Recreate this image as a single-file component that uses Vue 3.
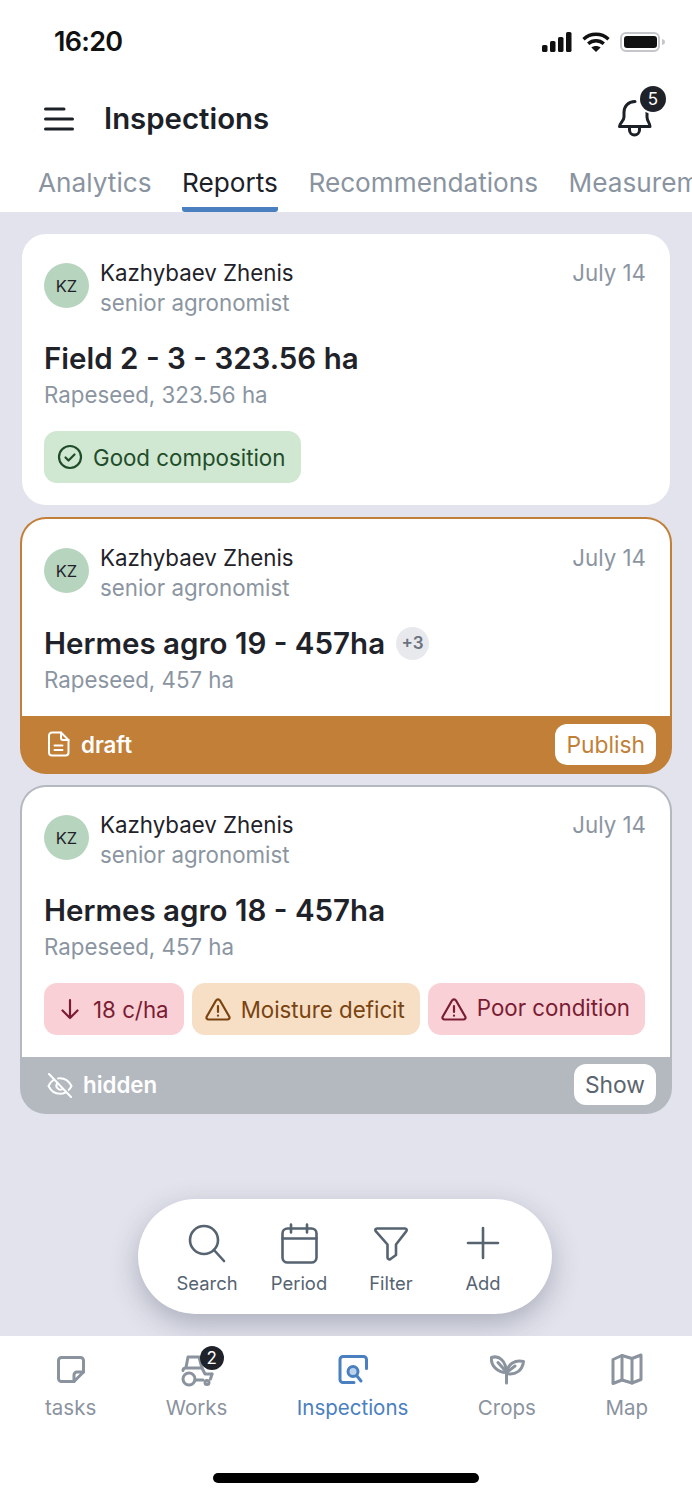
<script setup>
const tabs = [
  { label: 'Analytics' },
  { label: 'Reports', active: true },
  { label: 'Recommendations' },
  { label: 'Measurements' },
]
</script>

<template>
  <div class="screen">
    <div class="status">
      <span class="time">16:20</span>
      <div class="status-icons">
        <svg width="30" height="20" viewBox="0 0 30 20" fill="#111">
          <rect x="0" y="13" width="5.5" height="7" rx="1.6" />
          <rect x="8" y="9" width="5.5" height="11" rx="1.6" />
          <rect x="16" y="5" width="5.5" height="15" rx="1.6" />
          <rect x="24" y="0" width="5.5" height="20" rx="1.6" />
        </svg>
        <svg width="28" height="20" viewBox="0 0 28 20" fill="none" stroke="#111" stroke-width="3.4">
          <path d="M1.5 7.2C8.6 .6 19.4 .6 26.5 7.2" />
          <path d="M6.2 11.8c4.5-4 11.1-4 15.6 0" />
          <path d="M14 20l-4.6-4.6c2.6-2 6.6-2 9.2 0z" fill="#111" stroke="none" />
        </svg>
        <svg width="46" height="20" viewBox="0 0 46 20">
          <rect x="1" y="1" width="38" height="18" rx="5" fill="none" stroke="#c4c6c9" stroke-width="2" />
          <rect x="4" y="4" width="33" height="12" rx="3" fill="#111" />
          <path d="M42 7c2 .4 3 1.500 3 3s-1 2.600-3 3z" fill="#c4c6c9" />
        </svg>
      </div>
    </div>

    <header class="header">
      <svg class="menu" width="30" height="24" viewBox="0 0 30 24" fill="none" stroke="#1c2128" stroke-width="3" stroke-linecap="round">
        <path d="M1.500 2H20" />
        <path d="M1.500 12H28.500" />
        <path d="M1.500 22H28.500" />
      </svg>
      <h1 class="title">Inspections</h1>
      <div class="bell">
        <svg width="36" height="42" viewBox="0 0 36 42" fill="none" stroke="#1c2128" stroke-width="3" stroke-linecap="round" stroke-linejoin="round">
          <path d="M18 3.500C11 3.500 7 8.500 7 14.500V19C7 23 2.500 25 2.500 28.500H33C33 25 30 23 30 19V14" />
          <path d="M12.500 28.500v3.500a5 5 0 0 0 10 0v-3.500" />
        </svg>
        <span class="bell-badge">5</span>
      </div>
    </header>

    <nav class="tabs">
      <span v-for="t in tabs" :key="t.label" class="tab" :class="{ active: t.active }">{{ t.label }}</span>
    </nav>

    <main class="main">
      <article class="card plain">
        <div class="person">
          <span class="avatar">KZ</span>
          <div class="who">
            <div class="name">Kazhybaev Zhenis</div>
            <div class="role">senior agronomist</div>
          </div>
          <span class="date">July 14</span>
        </div>
        <h2 class="field">Field 2 - 3 - 323.56 ha</h2>
        <p class="crop">Rapeseed, 323.56 ha</p>
        <div class="badges">
          <span class="badge green">
            <svg width="26" height="26" viewBox="0 0 26 26" fill="none" stroke="currentColor" stroke-width="2.200" stroke-linecap="round" stroke-linejoin="round">
              <circle cx="13" cy="13" r="11" />
              <path d="M8.500 13.500l3 3 6-6" />
            </svg>
            Good composition
          </span>
        </div>
      </article>

      <article class="card framed draft">
        <div class="inner">
          <div class="person">
            <span class="avatar">KZ</span>
            <div class="who">
              <div class="name">Kazhybaev Zhenis</div>
              <div class="role">senior agronomist</div>
            </div>
            <span class="date">July 14</span>
          </div>
          <h2 class="field">Hermes agro 19 - 457ha <span class="more">+3</span></h2>
          <p class="crop">Rapeseed, 457 ha</p>
        </div>
        <div class="foot foot-draft">
          <div class="state">
            <svg width="24" height="26" viewBox="0 0 24 26" fill="none" stroke="#fff" stroke-width="2" stroke-linecap="round" stroke-linejoin="round">
              <path d="M5 1.500h9l7.500 7.500v12.500a3 3 0 0 1-3 3H5a3 3 0 0 1-3-3v-17a3 3 0 0 1 3-3z" />
              <path d="M14 1.500V7a2 2 0 0 0 2 2h5.500" />
              <path d="M7.500 14.500h8M7.500 19h8" />
            </svg>
            draft
          </div>
          <button class="action publish">Publish</button>
        </div>
      </article>

      <article class="card framed hidden">
        <div class="inner">
          <div class="person">
            <span class="avatar">KZ</span>
            <div class="who">
              <div class="name">Kazhybaev Zhenis</div>
              <div class="role">senior agronomist</div>
            </div>
            <span class="date">July 14</span>
          </div>
          <h2 class="field">Hermes agro 18 - 457ha</h2>
          <p class="crop">Rapeseed, 457 ha</p>
          <div class="badges tight">
            <span class="badge pink">
              <svg width="26" height="26" viewBox="0 0 26 26" fill="none" stroke="currentColor" stroke-width="2.200" stroke-linecap="round" stroke-linejoin="round">
                <path d="M13 4v18M5.500 14.500L13 22l7.500-7.500" />
              </svg>
              18 c/ha
            </span>
            <span class="badge orange">
              <svg width="26" height="26" viewBox="0 0 26 26" fill="none" stroke="currentColor" stroke-width="2.200" stroke-linecap="round" stroke-linejoin="round">
                <path d="M11 4.500L1.800 20.500c-.9 1.600.2 3 1.800 3h18.800c1.600 0 2.700-1.400 1.800-3L15 4.500c-.9-1.500-3.100-1.500-4 0z" />
                <path d="M13 10v6M13 19.500v.2" />
              </svg>
              Moisture deficit
            </span>
            <span class="badge pink raised">
              <svg width="26" height="26" viewBox="0 0 26 26" fill="none" stroke="currentColor" stroke-width="2.200" stroke-linecap="round" stroke-linejoin="round">
                <path d="M11 4.500L1.800 20.500c-.9 1.600.2 3 1.800 3h18.800c1.600 0 2.700-1.400 1.800-3L15 4.500c-.9-1.500-3.100-1.500-4 0z" />
                <path d="M13 10v6M13 19.500v.2" />
              </svg>
              <span class="raised-text">Poor condition</span>
            </span>
          </div>
        </div>
        <div class="foot foot-hidden">
          <div class="state">
            <svg width="26" height="26" viewBox="0 0 26 26" fill="none" stroke="#fff" stroke-width="2" stroke-linecap="round" stroke-linejoin="round">
              <path d="M2 2l22 23" />
              <path d="M7 7.500C4.500 9.200 2.700 11.500 1.500 14c2.500 5 6.800 7.800 11.500 7.800 2 0 4-.5 5.700-1.500" />
              <path d="M11 6.400c.7-.1 1.300-.2 2-.2 4.700 0 9 3 11.500 7.800-.8 1.500-1.700 2.800-2.800 3.900" />
              <path d="M10 11.500a4 4 0 0 0 5.500 5.500" />
            </svg>
            hidden
          </div>
          <button class="action show">Show</button>
        </div>
      </article>

      <div class="pill">
        <div class="pill-item">
          <svg width="44" height="44" viewBox="0 0 44 44" fill="none" stroke="#566371" stroke-width="2.600" stroke-linecap="round" stroke-linejoin="round">
            <circle cx="19" cy="18" r="14" />
            <path d="M29 28l10 11" />
          </svg>
          <span>Search</span>
        </div>
        <div class="pill-item">
          <svg width="44" height="44" viewBox="0 0 44 44" fill="none" stroke="#566371" stroke-width="2.600" stroke-linecap="round" stroke-linejoin="round">
            <rect x="5.500" y="6.500" width="34" height="34" rx="5" />
            <path d="M5.500 16.500h34M14 2.500v8M30 2.500v8" />
          </svg>
          <span>Period</span>
        </div>
        <div class="pill-item">
          <svg width="44" height="44" viewBox="0 0 44 44" fill="none" stroke="#566371" stroke-width="2.600" stroke-linecap="round" stroke-linejoin="round">
            <path d="M8 6.500h28c1.500 0 2.200 1.500 1.300 2.700L27 22.500V33l-5.500 4c-1.400.8-3 .2-3-1.500V22.500L6.700 9.200C5.800 8 6.500 6.500 8 6.500z" />
          </svg>
          <span>Filter</span>
        </div>
        <div class="pill-item">
          <svg width="44" height="44" viewBox="0 0 44 44" fill="none" stroke="#566371" stroke-width="2.600" stroke-linecap="round">
            <path d="M22 6v30M7 21h30" />
          </svg>
          <span>Add</span>
        </div>
      </div>
    </main>

    <footer class="bar">
      <div class="bar-row">
        <div class="bar-item">
          <svg width="36" height="36" viewBox="0 0 36 36" fill="none" stroke="#8a939e" stroke-width="3" stroke-linecap="round" stroke-linejoin="round">
            <path d="M8.500 5.500h19a3 3 0 0 1 3 3V20L21 29.500H8.500a3 3 0 0 1-3-3v-18a3 3 0 0 1 3-3z" />
            <path d="M30.500 20H24a3 3 0 0 0-3 3v6.500" />
          </svg>
          <span>tasks</span>
        </div>
        <div class="bar-item">
          <svg width="36" height="36" viewBox="0 0 36 36" fill="none" stroke="#8a939e" stroke-width="3" stroke-linecap="round" stroke-linejoin="round">
            <path d="M7 15.500L9 5H20L23 16" />
            <path d="M4 18.500C4 16.500 5 16 7 16H23L26 22H33" />
            <path d="M33 22L31.500 27" />
            <path d="M16 28H24" />
            <circle cx="10" cy="27" r="6" />
            <circle cx="28" cy="30.500" r="2" />
          </svg>
          <span>Works</span>
          <span class="bar-badge">2</span>
        </div>
        <div class="bar-item current">
          <svg width="36" height="36" viewBox="0 0 36 36" fill="none" stroke="#4a80bf" stroke-width="3" stroke-linecap="round" stroke-linejoin="round">
            <path d="M19 30.500H8a3 3 0 0 1-3-3v-20a3 3 0 0 1 3-3h20.500a3 3 0 0 1 3 3v9" />
            <circle cx="18" cy="19.500" r="5" fill="#bcd2ec" />
            <path d="M22 24l4 5" />
          </svg>
          <span>Inspections</span>
        </div>
        <div class="bar-item">
          <svg width="36" height="36" viewBox="0 0 36 36" fill="none" stroke="#8a939e" stroke-width="3" stroke-linecap="round" stroke-linejoin="round">
            <path d="M2.500 5.500C10 3 17.500 9 17 20.500 9 20.500 1.500 14 2.500 5.500z" />
            <path d="M34.500 9.500c-8-2-16 2-17 12 9 2 16-3 17-12z" />
            <path d="M17.500 20v11M9 10.500l8 9M26 14l-8 6" />
          </svg>
          <span>Crops</span>
        </div>
        <div class="bar-item">
          <svg width="36" height="36" viewBox="0 0 36 36" fill="none" stroke="#8a939e" stroke-width="3" stroke-linecap="round" stroke-linejoin="round">
            <path d="M4 7.500L13 3.500 23 6.500 32 3V27.500L23 31 13 28 4 31.500z" />
            <path d="M13 3.500V28M23 6.500V31" />
          </svg>
          <span>Map</span>
        </div>
      </div>
      <div class="home"></div>
    </footer>
  </div>
</template>

<style>
html, body { margin: 0; background: #fff; }
</style>

<style scoped>
.screen {
  width: 692px;
  height: 1499px;
  display: flex;
  flex-direction: column;
  overflow: hidden;
  background: #fff;
  font-family: Inter, "Liberation Sans", sans-serif;
  color: #1f2329;
}
.status {
  height: 76px;
  flex: none;
  box-sizing: border-box;
  padding: 22px 26px 0 54px;
  display: flex;
  justify-content: space-between;
  align-items: flex-start;
}
.time {
  font-size: 27px;
  font-weight: 600;
  line-height: 40px;
  color: #111;
  letter-spacing: -0.7px;
}
.status-icons {
  display: flex;
  align-items: center;
  gap: 10px;
  padding-top: 10px;
}
.header {
  height: 86px;
  flex: none;
  box-sizing: border-box;
  padding: 0 39px 0 44px;
  display: flex;
  align-items: center;
}
.menu { flex: none; }
.title {
  margin: 0 0 2px 30px;
  font-size: 29.400px;
  font-weight: 600;
  color: #1c2128;
}
.bell {
  position: relative;
  margin-left: auto;
  width: 36px;
  height: 42px;
}
.bell svg { display: block; }
.bell-badge {
  position: absolute;
  left: 23px;
  top: -12px;
  width: 26px;
  height: 26px;
  border-radius: 50%;
  background: #1f2329;
  color: #fff;
  font-size: 17px;
  line-height: 26px;
  text-align: center;
  box-shadow: 0 0 0 2px #fff;
}
.tabs {
  height: 50px;
  flex: none;
  box-sizing: border-box;
  padding-left: 38px;
  display: flex;
  gap: 30.500px;
  overflow: hidden;
  white-space: nowrap;
}
.tab {
  flex: none;
  font-size: 26.200px;
  line-height: 42px;
  height: 50px;
  box-sizing: border-box;
  color: #8a94a0;
}
.tab.active {
  color: #1c2128;
  border-bottom: 5px solid #4a80bf;
  border-radius: 0 0 3px 3px;
}
.main {
  flex: 1;
  position: relative;
  box-sizing: border-box;
  padding: 22px 20px 0;
  background: #e2e3ec;
  display: flex;
  flex-direction: column;
  gap: 11px;
}
.card {
  overflow: hidden;
}
.plain {
  margin: 0 2px 1px;
  padding: 24px 22px 22px;
  border-radius: 24px;
  background: #fff;
}
.framed {
  padding: 2px 2px 2px;
  border-radius: 26px;
}
.draft { background: #c27f38; }
.hidden { background: #b4b9c0; }
.inner {
  padding: 24px 22px 0;
  background: #fff;
  border-radius: 24px 24px 0 0;
}
.draft .inner { padding-bottom: 21px; }
.hidden .inner { padding-top: 23px; padding-bottom: 22px; }
.person {
  display: flex;
  align-items: flex-start;
}
.avatar {
  flex: none;
  width: 45px;
  height: 45px;
  margin-top: 5px;
  border-radius: 50%;
  background: #b7d4bf;
  color: #1f2329;
  font-size: 16.500px;
  line-height: 47px;
  text-align: center;
}
.who { margin-left: 11px; flex: 1; }
.name {
  font-size: 22.300px;
  line-height: 30px;
  color: #1f2329;
}
.role {
  font-size: 22.300px;
  line-height: 30px;
  color: #8b95a1;
}
.date {
  font-size: 22.300px;
  line-height: 30px;
  color: #8b95a1;
  margin-right: 2px;
}
.field {
  margin: 20px 0 0;
  font-size: 29.500px;
  font-weight: 600;
  line-height: 40px;
  color: #1f2329;
  display: flex;
  align-items: center;
  gap: 11px;
}
.more {
  width: 33px;
  height: 33px;
  border-radius: 50%;
  background: #e8e9ed;
  color: #6b7280;
  font-size: 17px;
  font-weight: 600;
  line-height: 33px;
  text-align: center;
}
.crop {
  margin: 2px 0 0;
  font-size: 22.300px;
  line-height: 30px;
  color: #8b95a1;
}
.badges {
  margin-top: 21px;
  display: flex;
  gap: 8px;
}
.badge {
  height: 52px;
  box-sizing: border-box;
  padding: 0 15px 0 13px;
  border-radius: 13px;
  display: inline-flex;
  align-items: center;
  gap: 10px;
  font-size: 22.300px;
  white-space: nowrap;
}
.green { background: #d0e7d1; color: #1f4d2a; padding-right: 16px; }
.pink { background: #f9d0d5; color: #7a1c33; }
.orange { background: #f6dfc5; color: #7a4310; }
.raised-text { margin-top: -4px; }
.foot {
  display: flex;
  align-items: center;
  justify-content: space-between;
  padding: 0 14px 0 25px;
}
.foot-draft { height: 56px; }
.foot-hidden { height: 55px; }
.state {
  display: flex;
  align-items: center;
  gap: 10px;
  font-size: 22.300px;
  font-weight: 600;
  color: #fff;
}
.action {
  height: 41px;
  padding: 0 11px;
  border: 0;
  border-radius: 12px;
  background: #fff;
  font-family: inherit;
  font-size: 22.800px;
}
.publish { color: #c27f38; }
.show { color: #5c6470; }
.pill {
  position: absolute;
  left: 138px;
  bottom: 22px;
  width: 414px;
  height: 115px;
  box-sizing: border-box;
  padding: 23px 23px 0;
  border-radius: 58px;
  background: #fff;
  box-shadow: 0 10px 28px rgba(60, 65, 90, 0.32);
  display: flex;
}
.pill-item {
  width: 92px;
  display: flex;
  flex-direction: column;
  align-items: center;
  color: #566371;
  font-size: 18.400px;
  line-height: 26px;
}
.pill-item span { margin-top: 4px; }
.pill-item svg { display: block; }
.bar {
  height: 163px;
  flex: none;
  box-sizing: border-box;
  position: relative;
  background: #fff;
  padding-top: 16px;
  display: flex;
  flex-direction: column;
}
.bar-row {
  display: flex;
  gap: 69.500px;
  padding-left: 45px;
}
.bar-item {
  position: relative;
  display: flex;
  flex-direction: column;
  align-items: center;
  gap: 5px;
  color: #8a939e;
  font-size: 20.500px;
  line-height: 30px;
}
.bar-item svg { display: block; }
.bar-item.current { color: #4a80bf; }
.bar-badge {
  position: absolute;
  left: 34px;
  top: -6px;
  width: 24px;
  height: 24px;
  border-radius: 50%;
  background: #1f2329;
  color: #fff;
  font-size: 17px;
  line-height: 24px;
  text-align: center;
}
.home {
  margin: 50px 0 0 213px;
  width: 266px;
  height: 10px;
  border-radius: 5px;
  background: #000;
}
</style>
